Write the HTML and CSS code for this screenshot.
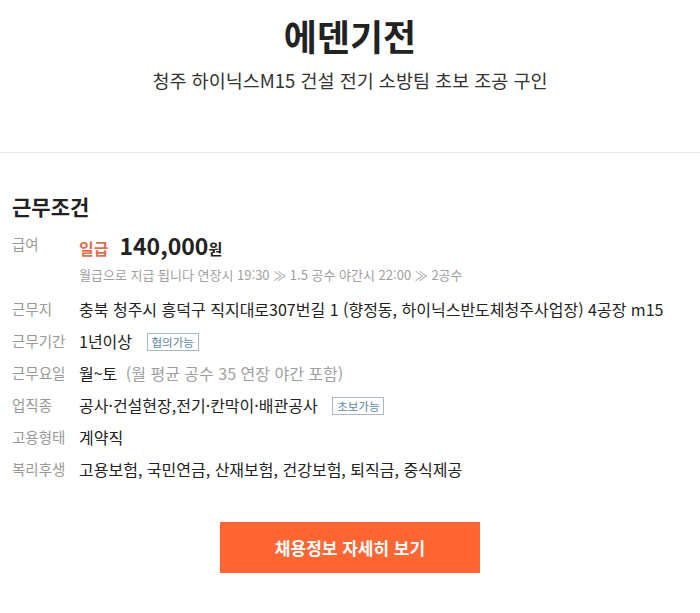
FILE: index.html
```html
<!DOCTYPE html>
<html lang="ko">
<head>
<meta charset="utf-8">
<title>에덴기전</title>
<link rel="stylesheet" href="styles.css">
</head>
<body>
<header class="head">
  <h1 class="title">에덴기전</h1>
  <p class="subtitle">청주 하이닉스M15 건설 전기 소방팀 초보 조공 구인</p>
</header>
<section class="cond">
  <h2 class="cond-title">근무조건</h2>
  <div class="row row-pay">
    <div class="label label-pay">급여</div>
    <div class="value">
      <div class="pay-line"><span class="pay-type">일급</span><span class="pay-amount">140,000</span><span class="pay-unit">원</span></div>
      <div class="pay-note">월급으로 지급 됩니다 연장시 19:30 ≫ 1.5 공수 야간시 22:00 ≫ 2공수</div>
    </div>
  </div>
  <div class="row">
    <div class="label">근무지</div>
    <div class="value">충북 청주시 흥덕구 직지대로307번길 1 (향정동, 하이닉스반도체청주사업장) 4공장 m15</div>
  </div>
  <div class="row">
    <div class="label">근무기간</div>
    <div class="value">1년이상 <span class="badge">협의가능</span></div>
  </div>
  <div class="row">
    <div class="label">근무요일</div>
    <div class="value">월~토 <span class="muted">(월 평균 공수 35 연장 야간 포함)</span></div>
  </div>
  <div class="row">
    <div class="label">업직종</div>
    <div class="value">공사·건설현장,전기·칸막이·배관공사 <span class="badge">초보가능</span></div>
  </div>
  <div class="row">
    <div class="label">고용형태</div>
    <div class="value">계약직</div>
  </div>
  <div class="row">
    <div class="label">복리후생</div>
    <div class="value">고용보험, 국민연금, 산재보험, 건강보험, 퇴직금, 중식제공</div>
  </div>
  <div class="actions">
    <a class="btn" href="#">채용정보 자세히 보기</a>
  </div>
</section>
</body>
</html>
```

FILE: styles.css
```css
html, body {
  margin: 0;
  padding: 0;
  background: #fff;
}
body {
  font-family: "Noto Sans CJK KR", "Noto Sans", sans-serif;
  color: #222;
}
.head {
  text-align: center;
  padding-top: 9px;
  height: 153px;
  border-bottom: 1px solid #e8e8e8;
  box-sizing: border-box;
}
.title {
  margin: 0;
  font-size: 36px;
  font-weight: 700;
  line-height: 52px;
  color: #222;
}
.subtitle {
  margin: 6px 0 0;
  font-size: 18.5px;
  line-height: 26px;
  color: #333;
}
.cond {
  padding: 38px 12px 0;
}
.cond-title {
  margin: 0 0 9px;
  font-size: 21px;
  font-weight: 700;
  line-height: 30px;
  color: #222;
}
.row {
  display: flex;
  align-items: flex-start;
  min-height: 32px;
  font-size: 16px;
  line-height: 24px;
}
.label {
  width: 67px;
  flex: none;
  color: #999;
  font-size: 14.5px;
}
.label-pay {
  padding-top: 2px;
}
.value {
  color: #222;
}
.row-pay {
  margin-bottom: 12px;
}
.pay-line {
  display: flex;
  align-items: baseline;
  line-height: 30px;
}
.pay-type {
  color: #e07050;
  font-weight: 700;
  font-size: 16px;
  margin-right: 11px;
}
.pay-amount {
  font-size: 23px;
  font-weight: 700;
  color: #222;
}
.pay-unit {
  font-size: 15px;
  font-weight: 700;
  color: #222;
}
.pay-note {
  font-size: 13px;
  line-height: 20px;
  color: #a0a0a0;
  margin-top: 1px;
}
.badge {
  display: inline-block;
  margin-left: 10px;
  padding: 0 4px;
  border: 1px solid #a8b8c4;
  color: #5a85a6;
  font-size: 11.5px;
  line-height: 16px;
  vertical-align: 1px;
}
.muted {
  color: #a0a0a0;
  margin-left: 4px;
}
.actions {
  display: flex;
  justify-content: center;
  margin-top: 33px;
}
.btn {
  display: block;
  width: 260px;
  height: 51px;
  line-height: 51px;
  text-align: center;
  background: #ff6633;
  color: #fff;
  font-size: 17px;
  font-weight: 700;
  text-decoration: none;
}
```
